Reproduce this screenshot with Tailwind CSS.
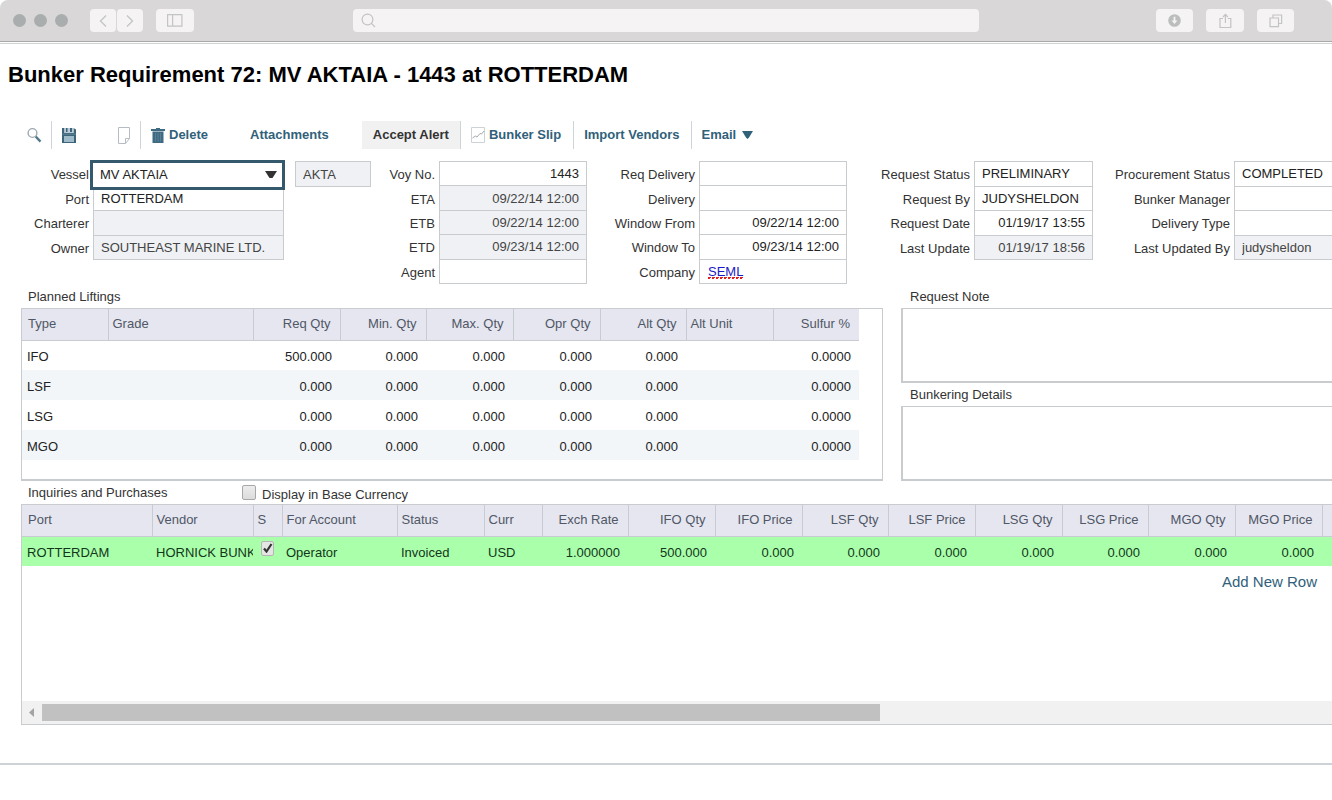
<!DOCTYPE html>
<html lang="en">
<head>
<meta charset="utf-8">
<meta name="viewport" content="width=device-width, initial-scale=1">
<title>Bunker Requirement 72</title>
<script src="https://cdn.jsdelivr.net/npm/@tailwindcss/browser@4"></script>
</head>
<body class="min-h-screen overflow-x-hidden bg-white font-['Liberation_Sans',Arial,sans-serif] text-[13px] leading-4 text-[#333]">

<!-- Browser chrome -->
<header class="border-b border-[#d0d3d2] pb-px">
  <div class="grid h-[42px] grid-cols-[1fr_47%_1fr] items-center rounded-t-lg border-b border-[#a9a8a9] bg-[#d9d7d8] text-[#c3c4c4]">
    <div class="flex items-center pl-[13px]">
      <div class="flex gap-2">
        <span class="size-[13px] rounded-full bg-[#a9adae]"></span>
        <span class="size-[13px] rounded-full bg-[#a9adae]"></span>
        <span class="size-[13px] rounded-full bg-[#a9adae]"></span>
      </div>
      <div class="ml-[22px] flex gap-px">
        <button aria-label="Back" class="flex h-[23px] w-[26px] items-center justify-center rounded bg-[#f5f3f4]"><svg width="8" height="12" viewBox="0 0 8 12" fill="none" stroke="currentColor" stroke-width="1.3"><path d="M7 .5 1.5 6 7 11.500"/></svg></button>
        <button aria-label="Forward" class="flex h-[23px] w-[26px] items-center justify-center rounded bg-[#f5f3f4]"><svg width="8" height="12" viewBox="0 0 8 12" fill="none" stroke="currentColor" stroke-width="1.3"><path d="M1 .5 6.500 6 1 11.500"/></svg></button>
      </div>
      <button aria-label="Sidebar" class="ml-[13px] flex h-[23px] w-[38px] items-center justify-center rounded bg-[#f5f3f4]"><svg width="16" height="13" viewBox="0 0 16 13" fill="none" stroke="currentColor" stroke-width="1.2"><path d="M.6.6h14.300v11.500H.6zM5.600.6v11.500"/></svg></button>
    </div>
    <label class="flex h-[23px] items-center rounded bg-[#f5f3f4] pl-2">
      <svg width="15" height="15" viewBox="0 0 15 15" fill="none" stroke="currentColor" stroke-width="1.2"><circle cx="6.500" cy="6.500" r="5.400"/><path d="m10.400 10.400 3.600 3.600"/></svg>
      <input aria-label="Address" type="text" class="h-full min-w-0 flex-1 bg-transparent px-2 outline-none">
    </label>
    <div class="flex items-center justify-end gap-[13px] pr-[38px]">
      <button aria-label="Downloads" class="flex h-[23px] w-[37px] items-center justify-center rounded bg-[#f5f3f4]"><svg width="13" height="13" viewBox="0 0 13 13"><circle cx="6.500" cy="6.500" r="6.300" fill="#bcbebe"/><path d="M5.600 2.800h1.800v3.700h2L6.500 10 3.600 6.500h2z" fill="#f5f3f4"/></svg></button>
      <button aria-label="Share" class="flex h-[23px] w-[38px] items-center justify-center rounded bg-[#f5f3f4]"><svg width="13" height="16" viewBox="0 0 13 16" fill="none" stroke="currentColor" stroke-width="1.200"><path d="M4 5.500H1v9h10.800v-9h-3M6.400 10V1.500M4 4l2.400-2.700L8.800 4"/></svg></button>
      <button aria-label="Tabs" class="flex h-[23px] w-[37px] items-center justify-center rounded bg-[#f5f3f4]"><svg width="14" height="14" viewBox="0 0 14 14" fill="none" stroke="currentColor" stroke-width="1.200"><path d="M1 4h8.500v8.700H1zM4 4V1h8.600v8.500H9.500"/></svg></button>
    </div>
  </div>
</header>

<main>
  <h1 class="mt-[17px] pl-2 text-[22px] leading-7 font-bold whitespace-nowrap text-black">Bunker Requirement 72: MV AKTAIA - 1443 at ROTTERDAM</h1>

  <!-- Toolbar -->
  <nav class="mt-8 flex h-7 items-center pl-[26px] font-bold whitespace-nowrap text-[#31617a]">
    <button aria-label="Search"><svg width="16" height="17" viewBox="0 0 16 17" fill="none"><circle cx="6.500" cy="6" r="4.400" stroke="#9aa9b3" stroke-width="1.400"/><path d="m9.800 9.600 4.700 5" stroke="#54788b" stroke-width="2.300"/></svg></button>
    <span class="ml-[9px] h-full w-px bg-[#cfd4d8]"></span>
    <button aria-label="Save" class="ml-2.5"><svg width="14" height="15" viewBox="0 0 14 15"><path d="M0 0h2.500v5h9V0L14 1.500V15H0z" fill="#3c657b"/><path d="M2.500 0h9v5h-9z" fill="#b9cbd5"/><path d="M4 0h1.500v4H4zM8 0h2v4H8z" fill="#3c657b"/><path d="M2 8h10v6H2z" fill="#9fbac8"/><path d="M0 5.500h14V7H0z" fill="#54798d"/></svg></button>
    <button aria-label="New page" class="ml-[42px]"><svg width="12" height="17" viewBox="0 0 12 17" fill="none" stroke="#b5bcc3"><path d="M.5.5h11v11l-4 5h-7zM7.500 16.500v-5h4"/></svg></button>
    <span class="ml-2.5 h-full w-px bg-[#cfd4d8]"></span>
    <button class="ml-2.5 flex items-center gap-1"><svg width="14" height="15" viewBox="0 0 14 15"><path d="M5 0h4v1h5v2H0V1h5zM1.500 3.500h11V15h-11z" fill="#3f6a82"/><path d="M4.500 5v8.500M7 5v8.500M9.500 5v8.500" stroke="#5f8ba1" stroke-width=".7"/></svg>Delete</button>
    <button class="ml-[42px]">Attachments</button>
    <button class="ml-[33px] h-full border-r border-[#cfd4d8] bg-[#f1f1f1] px-[11px] text-[#333]">Accept Alert</button>
    <button class="ml-2.5 flex items-center gap-1"><svg width="14" height="16" viewBox="0 0 14 16" fill="none"><path d="M.5.5h13v15H.5z" stroke="#cdd2d6"/><path d="m1.500 11 3-2 1.500 1 3-3.500 1.500.5L13 4" stroke="#a3a9ae"/></svg>Bunker Slip</button>
    <span class="ml-3 h-full w-px bg-[#cfd4d8]"></span>
    <button class="ml-2.5">Import Vendors</button>
    <span class="ml-[11px] h-full w-px bg-[#cfd4d8]"></span>
    <button class="ml-2.5 flex items-center gap-1.5">Email<svg width="11" height="8" viewBox="0 0 11 8"><path d="M0 0h11L7 6.500 5.500 8 4 6.500z" fill="#31617a"/></svg></button>
  </nav>

  <!-- Requirement fields -->
  <form class="mt-3 flex h-[123px] items-start whitespace-nowrap pl-[21px] [&_input]:-mb-px [&_input]:min-w-0 [&_input]:border [&_input]:border-[#c8cccf] [&_input]:px-[7px] [&_input]:pt-px [&_input]:text-[#222] [&_input:read-only]:bg-[#eff1f4] [&_input:read-only]:text-[#444] [&_label]:self-center [&_label]:pt-1 [&_label]:text-right">
    <div class="grid h-[98px] grid-cols-[68px_191px] grid-rows-4 gap-x-1">
      <label for="vessel">Vessel</label>
      <div class="relative z-10 -mt-px -mr-px -mb-1 -ml-[3px]">
        <select id="vessel" class="h-full w-full appearance-none border-3 border-[#34586c] bg-white pl-[7px] text-[#222] outline-none"><option>MV AKTAIA</option></select>
        <svg class="pointer-events-none absolute top-[11px] right-2" width="12" height="8" viewBox="0 0 12 8"><path d="M0 0h12L7.500 7h-3z" fill="#333"/></svg>
      </div>
      <label for="port">Port</label><input id="port" value="ROTTERDAM">
      <label for="charterer">Charterer</label><input id="charterer" readonly>
      <label for="owner">Owner</label><input id="owner" readonly value="SOUTHEAST MARINE LTD.">
    </div>
    <input aria-label="Vessel code" readonly value="AKTA" class="ml-[11px] h-[26px] w-[76px]">
    <div class="grid h-[122px] grid-cols-[64px_148px] grid-rows-5 gap-x-1 [&_input]:text-right">
      <label for="voy">Voy No.</label><input id="voy" value="1443">
      <label for="eta">ETA</label><input id="eta" readonly value="09/22/14 12:00">
      <label for="etb">ETB</label><input id="etb" readonly value="09/22/14 12:00">
      <label for="etd">ETD</label><input id="etd" readonly value="09/23/14 12:00">
      <label for="agent">Agent</label><input id="agent">
    </div>
    <div class="grid h-[122px] grid-cols-[108px_148px] grid-rows-5 gap-x-1 [&_input]:text-right">
      <label for="reqdel">Req Delivery</label><input id="reqdel">
      <label for="del">Delivery</label><input id="del">
      <label for="wfrom">Window From</label><input id="wfrom" value="09/22/14 12:00">
      <label for="wto">Window To</label><input id="wto" value="09/23/14 12:00">
      <span class="self-center pt-1 text-right">Company</span>
      <div class="-mb-px flex items-center border border-[#c8cccf] px-2 pt-px"><span class="underline decoration-[#e02020] decoration-dotted decoration-2 underline-offset-2"><a href="#company" class="text-[#1a1ac8] underline decoration-1 underline-offset-1">SEML</a></span></div>
    </div>
    <div class="grid h-[98px] grid-cols-[123px_119px] grid-rows-4 gap-x-1">
      <label for="rstatus">Request Status</label><input id="rstatus" value="PRELIMINARY">
      <label for="rby">Request By</label><input id="rby" value="JUDYSHELDON">
      <label for="rdate">Request Date</label><input id="rdate" value="01/19/17 13:55" class="text-right">
      <label for="lupd">Last Update</label><input id="lupd" readonly value="01/19/17 18:56" class="text-right">
    </div>
    <div class="grid h-[98px] flex-1 grid-cols-[137px_1fr] grid-rows-4 gap-x-1 [&_input]:border-r-0">
      <label for="pstatus">Procurement Status</label><input id="pstatus" value="COMPLETED">
      <label for="mgr">Bunker Manager</label><input id="mgr">
      <label for="dtype">Delivery Type</label><input id="dtype">
      <label for="luby">Last Updated By</label><input id="luby" readonly value="judysheldon">
    </div>
  </form>

  <!-- Planned liftings and notes -->
  <div class="flex gap-[18px] pl-[21px]">
    <section class="w-[862px] shrink-0">
      <h2 class="h-6 pt-[5px] pl-[7px]">Planned Liftings</h2>
      <div class="h-[173px] border border-b-2 border-[#c8cccf]">
        <table class="w-[837px] table-fixed text-right [&_td]:h-[30px] [&_td]:px-2 [&_td]:pt-1 [&_td]:text-[#222] [&_th]:h-[31px] [&_th]:border-b [&_th]:border-[#c9cbd3] [&_th]:bg-[#e5e6ef] [&_th]:px-[9px] [&_th]:font-normal [&_th]:text-[#505766] [&_th+th]:border-l [&_tbody_tr:nth-child(even)]:bg-[#f3f6f9]">
          <colgroup><col class="w-[86px]"><col class="w-[145px]"><col class="w-[87px]"><col class="w-[86px]"><col class="w-[87px]"><col class="w-[87px]"><col class="w-[86px]"><col class="w-[87px]"><col></colgroup>
          <thead><tr><th class="text-left"><span class="-ml-[3px]">Type</span></th><th class="text-left"><span class="-ml-[5px]">Grade</span></th><th>Req Qty</th><th>Min. Qty</th><th>Max. Qty</th><th>Opr Qty</th><th>Alt Qty</th><th class="text-left"><span class="-ml-[5px]">Alt Unit</span></th><th>Sulfur %</th></tr></thead>
          <tbody>
            <tr><td class="text-left"><span class="-ml-[3px]">IFO</span></td><td></td><td>500.000</td><td>0.000</td><td>0.000</td><td>0.000</td><td>0.000</td><td></td><td>0.0000</td></tr>
            <tr><td class="text-left"><span class="-ml-[3px]">LSF</span></td><td></td><td>0.000</td><td>0.000</td><td>0.000</td><td>0.000</td><td>0.000</td><td></td><td>0.0000</td></tr>
            <tr><td class="text-left"><span class="-ml-[3px]">LSG</span></td><td></td><td>0.000</td><td>0.000</td><td>0.000</td><td>0.000</td><td>0.000</td><td></td><td>0.0000</td></tr>
            <tr><td class="text-left"><span class="-ml-[3px]">MGO</span></td><td></td><td>0.000</td><td>0.000</td><td>0.000</td><td>0.000</td><td>0.000</td><td></td><td>0.0000</td></tr>
          </tbody>
        </table>
      </div>
    </section>
    <section class="flex flex-1 flex-col">
      <label for="note" class="h-6 pt-[5px] pl-[9px]">Request Note</label>
      <textarea id="note" class="block h-[75px] w-full resize-none border-2 border-t border-r-0 border-[#c8cccf]"></textarea>
      <label for="details" class="h-[23px] pt-1 pl-[9px]">Bunkering Details</label>
      <textarea id="details" class="block h-[75px] w-full resize-none border-2 border-t border-r-0 border-[#c8cccf]"></textarea>
    </section>
  </div>

  <!-- Inquiries and purchases -->
  <section class="pl-[21px]">
    <div class="flex h-[23px] items-center pl-[7px]">
      <h2 class="w-[214px]">Inquiries and Purchases</h2>
      <input id="base" type="checkbox" class="h-[15px] w-[14px] appearance-none rounded-xs border border-[#a8a8a8] bg-linear-to-b from-[#ececec] to-[#dcdcdc]">
      <label for="base" class="pt-1 pl-1.5">Display in Base Currency</label>
    </div>
    <div class="flex h-[221px] flex-col overflow-hidden border border-r-0 border-[#c8cccf]">
      <table id="purchases" class="w-[1387px] table-fixed text-right whitespace-nowrap [&_td]:h-[30px] [&_td]:overflow-hidden [&_td]:bg-[#aaffaa] [&_td]:px-2 [&_td]:pt-1 [&_td]:text-[#12361a] [&_th]:h-[31px] [&_th]:border-b [&_th]:border-[#c9cbd3] [&_th]:bg-[#e5e6ef] [&_th]:px-[9px] [&_th]:font-normal [&_th]:text-[#505766] [&_th+th]:border-l">
        <colgroup><col class="w-[130px]"><col class="w-[101px]"><col class="w-[29px]"><col class="w-[115px]"><col class="w-[87px]"><col class="w-[58px]"><col class="w-[86px]"><col class="w-[87px]"><col class="w-[87px]"><col class="w-[86px]"><col class="w-[87px]"><col class="w-[87px]"><col class="w-[86px]"><col class="w-[87px]"><col class="w-[87px]"><col></colgroup>
        <thead><tr><th class="text-left"><span class="-ml-[3px]">Port</span></th><th class="text-left"><span class="-ml-[5px]">Vendor</span></th><th class="text-left"><span class="-ml-[5px]">S</span></th><th class="text-left"><span class="-ml-[5px]">For Account</span></th><th class="text-left"><span class="-ml-[5px]">Status</span></th><th class="text-left"><span class="-ml-[5px]">Curr</span></th><th>Exch Rate</th><th>IFO Qty</th><th>IFO Price</th><th>LSF Qty</th><th>LSF Price</th><th>LSG Qty</th><th>LSG Price</th><th>MGO Qty</th><th>MGO Price</th><th></th></tr></thead>
        <tbody>
          <tr><td class="text-left"><span class="-ml-[3px]">ROTTERDAM</span></td><td class="text-left"><div class="-mr-2 -ml-1 overflow-hidden">HORNICK BUNK</div></td><td><span class="relative -mt-2.5 block h-[15px] w-[13px]"><input type="checkbox" checked aria-label="Selected" class="block h-full w-full appearance-none rounded-xs border border-[#b5b5b5] bg-[#e4e6e4]"><svg class="pointer-events-none absolute top-0.5 left-0.5" width="10" height="10" viewBox="0 0 10 10" fill="none" stroke="#333" stroke-width="2.200"><path d="m1 5.500 2.500 3L8.500 1"/></svg></span></td><td class="text-left"><span class="-ml-1">Operator</span></td><td class="text-left"><span class="-ml-1">Invoiced</span></td><td class="text-left"><span class="-ml-1">USD</span></td><td>1.000000</td><td>500.000</td><td>0.000</td><td>0.000</td><td>0.000</td><td>0.000</td><td>0.000</td><td>0.000</td><td>0.000</td><td></td></tr>
        </tbody>
      </table>
      <div class="pt-2 pr-[15px] text-right"><a href="#add" class="text-[15px] text-[#31617a]">Add New Row</a></div>
      <div role="scrollbar" aria-label="Scroll table" aria-controls="purchases" aria-valuenow="0" class="mt-auto flex h-[23px] items-center bg-[#f1f1f1]">
        <svg class="ml-[7px]" width="5" height="9" viewBox="0 0 5 9"><path d="M5 0v9L0 4.500z" fill="#a3a3a3"/></svg>
        <span class="ml-2 h-[17px] w-[64%] bg-[#c1c1c1]"></span>
      </div>
    </div>
  </section>
  <hr class="mt-[38px] border-t-2 border-[#cdd2d6]">
</main>
</body>
</html>
